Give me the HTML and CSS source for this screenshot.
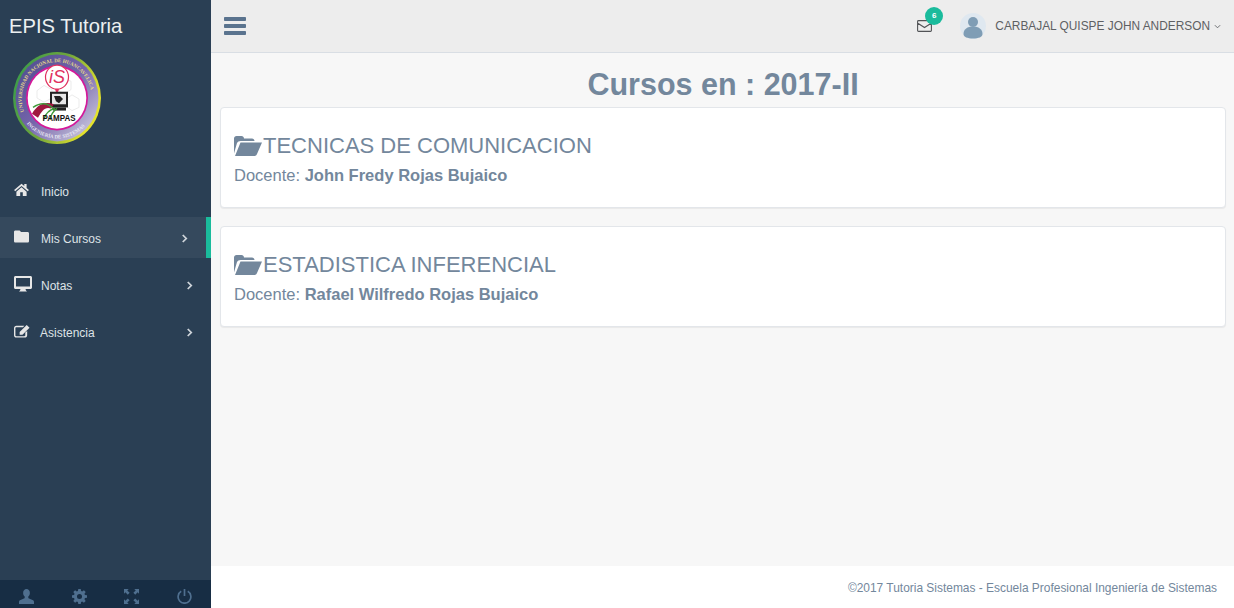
FILE: index.html
```html
<!DOCTYPE html>
<html lang="es">
<head>
<meta charset="utf-8">
<title>EPIS Tutoria</title>
<link rel="stylesheet" href="styles.css">
</head>
<body>
<div class="app">
  <aside class="sidebar">
    <div class="brand">EPIS Tutoria</div>
    <div class="logo-wrap">
      <svg class="logo" viewBox="0 3 90 88" width="90" height="92" preserveAspectRatio="none">
        <defs>
          <linearGradient id="ring" x1="0" y1="0" x2="1" y2="0.4">
            <stop offset="0" stop-color="#2f9a4c"/><stop offset="0.55" stop-color="#6fa53c"/><stop offset="1" stop-color="#e4e22c"/>
          </linearGradient>
          <linearGradient id="band" x1="0" y1="0" x2="1" y2="1">
            <stop offset="0" stop-color="#4a4a8c"/><stop offset="0.5" stop-color="#7565ab"/><stop offset="1" stop-color="#dcdce8"/>
          </linearGradient>
          <path id="arcTop" d="M12 60a35 35 0 1 1 66.500 -3"/>
          <path id="arcBot" d="M13 69a39 39 0 0 0 64 0"/>
        </defs>
        <circle cx="45" cy="47" r="44" fill="url(#ring)"/>
        <circle cx="45" cy="47" r="41.500" fill="url(#band)"/>
        <circle cx="45" cy="47" r="31" fill="#d4189a"/>
        <circle cx="45" cy="47" r="29.300" fill="#fff"/>
        <path d="M25 40l7-5 8 4v8l-8 4-7-4zM52 28l7 3v8l-7 4-7-4v-8zM60 44l7 4v8l-7 3-6-4v-7z" fill="none" stroke="#e6e6e6" stroke-width="0.8"/>
        <text class="arc-text top" fill="#e6d98a"><textPath href="#arcTop">UNIVERSIDAD NACIONAL DE HUANCAVELICA</textPath></text>
        <text class="arc-text" fill="#e8e8f2"><textPath href="#arcBot" startOffset="4%">INGENIERÍA DE SISTEMAS</textPath></text>
        <circle cx="45" cy="27" r="11.500" fill="#fff" stroke="#e0305f" stroke-width="1.200"/>
        <path d="M43 38.500h4l-1 3h-2z" fill="#e0305f"/>
        <text x="45" y="33" class="is-text">iS</text>
        <rect x="38" y="41" width="18" height="15" fill="#222"/>
        <rect x="40" y="43" width="14" height="10" fill="#e8e8e8"/>
        <path d="M42 45h6l3 3-4 4-3-2z" fill="#222"/>
        <rect x="41" y="56" width="13" height="3" fill="#222"/>
        <path d="M20 62c6-10 14-12 22-9l-3 4c-6-2-9 2-13 9z" fill="#a0183f"/>
        <path d="M21 56c8-5 15-4 20 1M32 67c2-6 6-9 11-10M38 68c1-5 4-9 7-11" fill="none" stroke="#3f9a3a" stroke-width="1.400"/>
        <text x="47" y="69" class="pampas">PAMPAS</text>
      </svg>
    </div>
    <nav class="menu">
      <a class="menu-item">
        <span class="ic"><svg class="mi-home" viewBox="0 0 16 14"><path d="M8 .8L0 7.600l1.200 1.400L8 3.200 14.800 9 16 7.600l-2.500-2.200V1.200H11v2zM8 4.600L2.500 9.300V14h4.100v-4h2.800v4h4.100V9.300z" fill="currentColor"/></svg></span>
        <span class="label">Inicio</span>
      </a>
      <a class="menu-item active">
        <span class="ic"><svg class="mi-folder" viewBox="0 0 16 13"><path d="M1.500 0h4.500l1.500 1.800h7c.8 0 1.500.7 1.500 1.500v8.200c0 .8-.7 1.500-1.500 1.500h-13C.7 13 0 12.300 0 11.500V1.500C0 .7.700 0 1.500 0z" fill="currentColor"/></svg></span>
        <span class="label">Mis Cursos</span>
        <svg class="chev" viewBox="0 0 8 10"><path d="M2 1l4 4-4 4" fill="none" stroke="currentColor" stroke-width="2"/></svg>
      </a>
      <a class="menu-item">
        <span class="ic"><svg class="mi-monitor" viewBox="0 0 18 16"><path d="M1.500 0h15c.8 0 1.500.7 1.500 1.500v10c0 .8-.7 1.500-1.500 1.500H11.500l.5 1.500 1 1H5l1-1 .5-1.500h-5C.7 13 0 12.300 0 11.500v-10C0 .7.700 0 1.500 0zm.5 2v8.500h14V2z" fill="currentColor" fill-rule="evenodd"/></svg></span>
        <span class="label">Notas</span>
        <svg class="chev far" viewBox="0 0 8 10"><path d="M2 1l4 4-4 4" fill="none" stroke="currentColor" stroke-width="2"/></svg>
      </a>
      <a class="menu-item">
        <span class="ic tight"><svg class="mi-edit" viewBox="0 0 17 14"><path d="M2.500 1.500H11L9.500 3h-7c-.5 0-1 .4-1 1v7.500c0 .6.500 1 1 1h8.500c.5 0 1-.4 1-1V8.500L14 7v4.500c0 1.400-1.100 2.500-2.500 2.500h-9C1.100 14 0 12.900 0 11.500V4c0-1.400 1.100-2.500 2.500-2.500zM13.500.5l3 3L9 11H6V8z" fill="currentColor"/></svg></span>
        <span class="label">Asistencia</span>
        <svg class="chev far" viewBox="0 0 8 10"><path d="M2 1l4 4-4 4" fill="none" stroke="currentColor" stroke-width="2"/></svg>
      </a>
    </nav>
    <div class="side-footer">
      <svg class="fi" viewBox="0 0 16 16"><path d="M8 0c2.200 0 3.600 1.800 3.600 4.200 0 1.700-.8 3.200-1.800 4l.3 1.600 4.300 2c1 .5 1.600 1 1.600 2V16H0v-2.200c0-1 .6-1.500 1.600-2l4.300-2 .3-1.600c-1-.8-1.800-2.300-1.800-4C4.400 1.800 5.800 0 8 0z" fill="currentColor"/></svg>
      <svg class="fi" viewBox="0 0 16 16"><path d="M6.700 0h2.600l.4 2.200 1.200.5L12.700 1.400l1.900 1.900-1.300 1.800.5 1.200 2.200.4v2.600l-2.200.4-.5 1.200 1.300 1.800-1.900 1.900-1.800-1.300-1.200.5L9.300 16H6.700l-.4-2.200-1.200-.5-1.800 1.300-1.900-1.900 1.300-1.800-.5-1.200L0 9.300V6.700l2.200-.4.500-1.200L1.400 3.300l1.900-1.900 1.800 1.300 1.200-.5zM8 5.300a2.700 2.700 0 1 0 0 5.400 2.700 2.700 0 0 0 0-5.400z" fill="currentColor" fill-rule="evenodd"/></svg>
      <svg class="fi" viewBox="0 0 16 16"><path d="M0 0h5L3.500 1.500 6 4 4 6 1.500 3.500 0 5zM16 0v5l-1.500-1.500L12 6l-2-2 2.500-2.500L11 0zM0 16v-5l1.500 1.500L4 10l2 2-2.500 2.500L5 16zM16 16h-5l1.500-1.500L10 12l2-2 2.500 2.500L16 11z" fill="currentColor"/></svg>
      <svg class="fi" viewBox="0 0 16 16"><path d="M8 0v7.500M4.500 2.500a6.800 6.800 0 1 0 7 0" fill="none" stroke="currentColor" stroke-width="1.800"/></svg>
    </div>
  </aside>
  <div class="main">
    <header class="topbar">
      <svg class="burger" viewBox="0 0 22 18"><path d="M0 .8C0 .4.400 0 .8 0h20.400c.4 0 .8.400.8.800v2.400c0 .4-.4.800-.8.800H.8C.4 4 0 3.600 0 3.200zm0 7c0-.4.400-.8.800-.8h20.400c.4 0 .8.400.8.800v2.400c0 .4-.4.800-.8.800H.8C.4 11 0 10.600 0 10.200zm0 7c0-.4.400-.8.800-.8h20.400c.4 0 .8.400.8.800v2.400c0 .4-.4.800-.8.800H.8C.4 18 0 17.600 0 17.200z" fill="currentColor"/></svg>
      <div class="top-right">
        <div class="mail">
          <svg class="mail-icon" viewBox="0 0 15 12"><path d="M1.500.6h12c.5 0 .9.400.9.900v9c0 .5-.4.900-.9.900h-12c-.5 0-.9-.4-.9-.9v-9c0-.5.400-.9.900-.9zM.8 3.200l6.700 4.300 6.700-4.300" fill="none" stroke="currentColor" stroke-width="1.100"/></svg>
          <span class="badge">6</span>
        </div>
        <div class="user">
          <svg class="avatar" viewBox="0 0 26 26"><circle cx="13" cy="13" r="13" fill="#dfe8f0"/><circle cx="13" cy="9" r="5" fill="#7f9db5"/><path d="M3.500 21c0-5 4-7.500 9.500-7.500s9.500 2.500 9.500 7.500c0 3-4 4.500-9.500 4.500S3.500 24 3.500 21z" fill="#7f9db5"/></svg>
          <span class="user-name">CARBAJAL QUISPE JOHN ANDERSON</span>
          <svg class="caret" viewBox="0 0 8 5"><path d="M1 1l3 3 3-3" fill="none" stroke="currentColor" stroke-width="1"/></svg>
        </div>
      </div>
    </header>
    <main class="content">
      <h1 class="page-title">Cursos en : 2017-II</h1>
      <section class="card">
        <h2 class="course"><svg class="open-folder" viewBox="0 0 28 20"><path d="M0 17.500V2.500C0 1.100 1.100 0 2.500 0h5C8.900 0 10 1.100 10 2.500h8c1.400 0 2.500 1.100 2.500 2.500H6.500C5 5 3.700 5.800 3 7zM6.500 6.500H28L23 18c-.4 1.100-1.300 2-2.500 2H1z" fill="currentColor"/></svg>TECNICAS DE COMUNICACION</h2>
        <p class="teacher">Docente: <strong>John Fredy Rojas Bujaico</strong></p>
      </section>
      <section class="card">
        <h2 class="course"><svg class="open-folder" viewBox="0 0 28 20"><path d="M0 17.500V2.500C0 1.100 1.100 0 2.500 0h5C8.900 0 10 1.100 10 2.500h8c1.400 0 2.500 1.100 2.500 2.500H6.500C5 5 3.700 5.800 3 7zM6.500 6.500H28L23 18c-.4 1.100-1.300 2-2.500 2H1z" fill="currentColor"/></svg>ESTADISTICA INFERENCIAL</h2>
        <p class="teacher">Docente: <strong>Rafael Wilfredo Rojas Bujaico</strong></p>
      </section>
    </main>
    <footer class="page-footer">©2017 Tutoria Sistemas - Escuela Profesional Ingeniería de Sistemas</footer>
  </div>
</div>
</body>
</html>
```
FILE: styles.css
```css
* { box-sizing: border-box; }
html, body { margin: 0; height: 100%; overflow: hidden; }
body { font-family: "Liberation Sans", Arial, sans-serif; color: #73879c; background: #f7f7f7; }
.app { display: flex; height: 608px; }

.sidebar { width: 211px; flex: none; display: flex; flex-direction: column; background: #2a3f54; color: #e7e7e7; }
.brand { height: 52px; padding: 13px 0 0 9px; font-size: 20.2px; line-height: 26px; color: #ecf0f1; }
.logo-wrap { height: 118px; padding-left: 12px; }
.logo { display: block; }
.arc-text { font: bold 5px "Liberation Serif", serif; }
.is-text { font: italic 18px "Liberation Sans", sans-serif; fill: #e0305f; text-anchor: middle; }
.pampas { font: bold 8px "Liberation Sans", sans-serif; fill: #111; text-anchor: middle; }

.menu { flex: 1; display: flex; flex-direction: column; gap: 6px; }
.menu-item { height: 41px; display: flex; align-items: center; padding-left: 14px; padding-top: 2px; font-size: 12px; color: #dfe3e7; }
.menu-item.active { background: #35495d; border-right: 5px solid #1abb9c; }
.ic { width: 27px; flex: none; display: flex; align-items: center; margin-top: -4px; color: #e7e7e7; }
.ic.tight { width: 26px; }
.mi-home { width: 15px; height: 13px; }
.mi-folder { width: 15px; height: 13px; }
.mi-monitor { width: 18px; height: 16px; }
.mi-edit { width: 16px; height: 14px; }
.label { flex: 1; }
.chev { width: 7px; height: 9px; flex: none; margin-right: 18px; color: #cfd5db; }
.chev.far { margin-right: 18px; }

.side-footer { height: 28px; display: grid; grid-template-columns: repeat(4, 1fr); justify-items: center; align-items: center; padding-top: 4px; background: #172d44; color: #4f6f8f; }
.fi { width: 15px; height: 15px; }

.main { flex: 1; min-width: 0; display: flex; flex-direction: column; }
.topbar { height: 53px; flex: none; display: flex; align-items: center; justify-content: space-between; padding: 0 13px; background: #ededed; border-bottom: 1px solid #d9dee4; color: #515356; }
.burger { width: 22px; height: 18px; color: #5a738e; }
.top-right { display: flex; align-items: center; gap: 28px; }
.mail { position: relative; display: flex; color: #515356; margin-top: -1px; }
.mail-icon { width: 15px; height: 12px; }
.badge { position: absolute; top: -13px; left: 8px; width: 18px; height: 18px; border-radius: 9px; background: #1abb9c; color: #fff; font-size: 8px; font-weight: bold; line-height: 18px; text-align: center; }
.user { display: flex; align-items: center; font-size: 11.880px; color: #5e6063; }
.avatar { width: 26px; height: 26px; flex: none; margin-right: 9px; }
.caret { width: 7px; height: 5px; margin-left: 4px; }

.content { flex: 1; padding: 0 8px 0 9px; }
.page-title { margin: 14px 0 5px; font-size: 30.500px; line-height: 35px; font-weight: bold; text-align: center; }
.card { height: 101px; margin-bottom: 18px; padding: 24px 13px 0; background: #fff; border: 1px solid #e3e6ea; border-radius: 4px; box-shadow: 0 1px 1px rgba(0,0,0,.06); }
.course { display: flex; align-items: center; margin: 0; font-size: 22px; line-height: 27px; font-weight: normal; }
.open-folder { width: 28px; height: 20px; flex: none; margin-right: 1px; }
.teacher { margin: 7px 0 0; font-size: 16.500px; line-height: 18px; }

.page-footer { height: 42px; flex: none; padding: 15px 17px 0 0; background: #fff; font-size: 11.940px; line-height: 14px; text-align: right; }
```
